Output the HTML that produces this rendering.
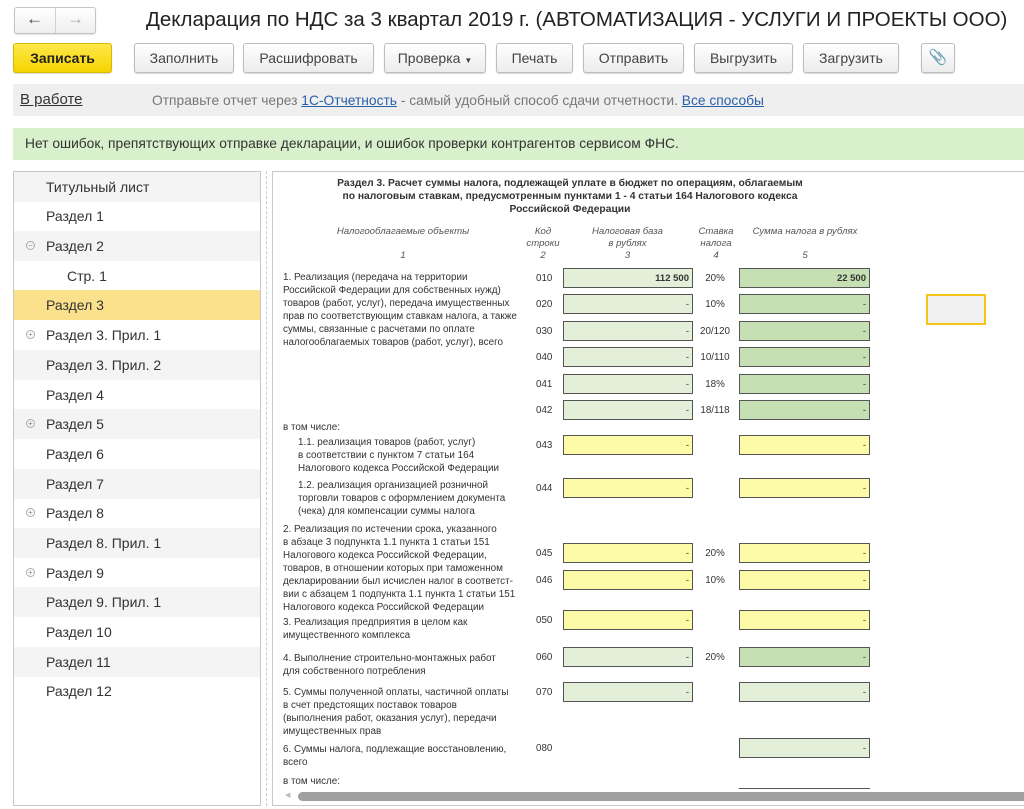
<!DOCTYPE html>
<html><head><meta charset="utf-8"><style>
*{margin:0;padding:0;box-sizing:border-box}
body{width:1024px;height:809px;overflow:hidden;background:#fff;font-family:"Liberation Sans",Arial,sans-serif;color:#333;position:relative}
.a{position:absolute}
.btn{position:absolute;top:43px;height:30px;border:1px solid #bdbdbd;border-radius:3px;background:linear-gradient(#fff,#ececec);box-shadow:0 1px 1px rgba(0,0,0,.15);font-size:14px;color:#444;text-align:center;line-height:28px}
.nav{position:absolute;left:14px;width:246px;height:30px;font-size:14px;line-height:30px;padding-left:32px;color:#333}
.nav.g{background:#f4f4f4}
.f{position:absolute;font-size:9.9px;line-height:13px;color:#333;white-space:nowrap}
.h{position:absolute;font-size:9.6px;font-style:italic;color:#555;text-align:center;line-height:12px}
.fld{position:absolute;height:20px;border:1px solid #555;font-size:9.5px;text-align:right;padding-right:3px;line-height:20px;color:#333}
.c3{left:563px;width:130px}
.c5{left:739px;width:131px}
.lg{background:#e3efd9}
.dg{background:#c6e0b4}
.yl{background:#fdfba8}
.code{position:absolute;left:536px;font-size:9.8px;color:#333}
.rate{position:absolute;left:695px;width:40px;text-align:center;font-size:9.8px;color:#333}
.tg{position:absolute;left:26px;width:9px;height:9px;border:1px solid #aaa;border-radius:50%;font-size:8px;line-height:7px;text-align:center;color:#888}
</style></head><body>
<div class="a" style="left:14px;top:7px;width:82px;height:27px;border:1px solid #c4c4c4;border-radius:3px;background:linear-gradient(#fff,#eee);box-shadow:0 1px 1px rgba(0,0,0,.12)"></div>
<div class="a" style="left:55px;top:8px;width:1px;height:25px;background:#d0d0d0"></div>
<div class="a" style="left:26px;top:9px;font-size:17px;color:#444">&#8592;</div>
<div class="a" style="left:67px;top:9px;font-size:17px;color:#aaa">&#8594;</div>
<div class="a" style="left:146px;top:8px;font-size:20.5px;color:#222;white-space:nowrap">Декларация по НДС за 3 квартал 2019 г. (АВТОМАТИЗАЦИЯ - УСЛУГИ И ПРОЕКТЫ ООО)</div>
<div class="btn" style="left:13px;width:99px;background:linear-gradient(#ffe84a,#f5d400);border-color:#d9b800;font-weight:bold;color:#222">Записать</div>
<div class="btn" style="left:134px;width:100px">Заполнить</div>
<div class="btn" style="left:243px;width:131px">Расшифровать</div>
<div class="btn" style="left:384px;width:102px">Проверка <span style="font-size:8px">&#9660;</span></div>
<div class="btn" style="left:496px;width:77px">Печать</div>
<div class="btn" style="left:583px;width:101px">Отправить</div>
<div class="btn" style="left:694px;width:99px">Выгрузить</div>
<div class="btn" style="left:803px;width:96px">Загрузить</div>
<div class="btn" style="left:921px;width:34px;font-size:15px;color:#666">&#128206;</div>
<div class="a" style="left:13px;top:84px;width:1011px;height:32px;background:#efefef"></div>
<div class="a" style="left:20px;top:91px;font-size:15px;color:#333;text-decoration:underline">В работе</div>
<div class="a" style="left:152px;top:93px;font-size:13.8px;color:#777;white-space:nowrap">Отправьте отчет через <span style="color:#2a5fa8;text-decoration:underline">1С-Отчетность</span> - самый удобный способ сдачи отчетности. <span style="color:#2a5fa8;text-decoration:underline">Все способы</span></div>
<div class="a" style="left:13px;top:128px;width:1011px;height:32px;background:#d8f0cc"></div>
<div class="a" style="left:25px;top:136px;font-size:13.8px;color:#333;white-space:nowrap">Нет ошибок, препятствующих отправке декларации, и ошибок проверки контрагентов сервисом ФНС.</div>
<div class="a" style="left:13px;top:171px;width:248px;height:635px;border:1px solid #c8c8c8"></div>
<div class="nav g" style="top:172px">Титульный лист</div>
<div class="nav" style="top:201px">Раздел 1</div>
<div class="nav g" style="top:231px">Раздел 2</div><div class="tg" style="top:241px">−</div>
<div class="nav" style="top:261px;padding-left:53px">Стр. 1</div>
<div class="nav" style="top:290px;background:#fbe18b">Раздел 3</div>
<div class="nav" style="top:320px">Раздел 3. Прил. 1</div><div class="tg" style="top:330px">+</div>
<div class="nav g" style="top:350px">Раздел 3. Прил. 2</div>
<div class="nav" style="top:380px">Раздел 4</div>
<div class="nav g" style="top:409px">Раздел 5</div><div class="tg" style="top:419px">+</div>
<div class="nav" style="top:439px">Раздел 6</div>
<div class="nav g" style="top:469px">Раздел 7</div>
<div class="nav" style="top:498px">Раздел 8</div><div class="tg" style="top:508px">+</div>
<div class="nav g" style="top:528px">Раздел 8. Прил. 1</div>
<div class="nav" style="top:558px">Раздел 9</div><div class="tg" style="top:568px">+</div>
<div class="nav g" style="top:587px">Раздел 9. Прил. 1</div>
<div class="nav" style="top:617px">Раздел 10</div>
<div class="nav g" style="top:647px">Раздел 11</div>
<div class="nav" style="top:676px">Раздел 12</div>
<div class="a" style="left:266px;top:171px;height:635px;border-left:1px dashed #ccc"></div>
<div class="a" style="left:272px;top:171px;width:760px;height:635px;border:1px solid #c8c8c8"></div>
<div class="a" style="left:290px;top:177px;width:560px;text-align:center;font-size:10.3px;font-weight:bold;line-height:13px;color:#333">Раздел 3. Расчет суммы налога, подлежащей уплате в бюджет по операциям, облагаемым<br>по налоговым ставкам, предусмотренным пунктами 1 - 4 статьи 164 Налогового кодекса<br>Российской Федерации</div>
<div class="h" style="left:283px;top:226px;width:240px">Налогооблагаемые объекты<br><br>1</div>
<div class="h" style="left:525px;top:226px;width:36px">Код<br>строки<br>2</div>
<div class="h" style="left:565px;top:226px;width:125px">Налоговая база<br>в рублях<br>3</div>
<div class="h" style="left:695px;top:226px;width:42px">Ставка<br>налога<br>4</div>
<div class="h" style="left:740px;top:226px;width:130px">Сумма налога в рублях<br><br>5</div>

<div class="f" style="left:283px;top:271px">1. Реализация (передача на территории<br>Российской Федерации для собственных нужд)<br>товаров (работ, услуг), передача имущественных<br>прав по соответствующим ставкам налога, а также<br>суммы, связанные с расчетами по оплате<br>налогооблагаемых товаров (работ, услуг), всего</div>
<div class="code" style="top:273px">010</div><div class="fld c3 lg" style="top:268px;font-weight:bold">112 500</div><div class="rate" style="top:273px">20%</div><div class="fld c5 dg" style="top:268px;font-weight:bold">22 500</div>
<div class="code" style="top:299px">020</div><div class="fld c3 lg" style="top:294px">-</div><div class="rate" style="top:299px">10%</div><div class="fld c5 dg" style="top:294px">-</div>
<div class="code" style="top:326px">030</div><div class="fld c3 lg" style="top:321px">-</div><div class="rate" style="top:326px">20/120</div><div class="fld c5 dg" style="top:321px">-</div>
<div class="code" style="top:352px">040</div><div class="fld c3 lg" style="top:347px">-</div><div class="rate" style="top:352px">10/110</div><div class="fld c5 dg" style="top:347px">-</div>
<div class="code" style="top:379px">041</div><div class="fld c3 lg" style="top:374px">-</div><div class="rate" style="top:379px">18%</div><div class="fld c5 dg" style="top:374px">-</div>
<div class="code" style="top:405px">042</div><div class="fld c3 lg" style="top:400px">-</div><div class="rate" style="top:405px">18/118</div><div class="fld c5 dg" style="top:400px">-</div>
<div class="a" style="left:926px;top:294px;width:60px;height:31px;border:2px solid #f5c518;background:#f0f0f0"></div>

<div class="f" style="left:283px;top:421px">в том числе:</div>
<div class="f" style="left:298px;top:436px">1.1. реализация товаров (работ, услуг)<br>в соответствии с пунктом 7 статьи 164<br>Налогового кодекса Российской Федерации</div>
<div class="code" style="top:440px">043</div><div class="fld c3 yl" style="top:435px">-</div><div class="fld c5 yl" style="top:435px">-</div>
<div class="f" style="left:298px;top:479px">1.2. реализация организацией розничной<br>торговли товаров с оформлением документа<br>(чека) для компенсации суммы налога</div>
<div class="code" style="top:483px">044</div><div class="fld c3 yl" style="top:478px">-</div><div class="fld c5 yl" style="top:478px">-</div>
<div class="f" style="left:283px;top:523px">2. Реализация по истечении срока, указанного<br>в абзаце 3 подпункта 1.1 пункта 1 статьи 151<br>Налогового кодекса Российской Федерации,<br>товаров, в отношении которых при таможенном<br>декларировании был исчислен налог в соответст-<br>вии с абзацем 1 подпункта 1.1 пункта 1 статьи 151<br>Налогового кодекса Российской Федерации</div>
<div class="code" style="top:548px">045</div><div class="fld c3 yl" style="top:543px">-</div><div class="rate" style="top:548px">20%</div><div class="fld c5 yl" style="top:543px">-</div>
<div class="code" style="top:575px">046</div><div class="fld c3 yl" style="top:570px">-</div><div class="rate" style="top:575px">10%</div><div class="fld c5 yl" style="top:570px">-</div>
<div class="f" style="left:283px;top:616px">3. Реализация предприятия в целом как<br>имущественного комплекса</div>
<div class="code" style="top:615px">050</div><div class="fld c3 yl" style="top:610px">-</div><div class="fld c5 yl" style="top:610px">-</div>
<div class="f" style="left:283px;top:652px">4. Выполнение строительно-монтажных работ<br>для собственного потребления</div>
<div class="code" style="top:652px">060</div><div class="fld c3 lg" style="top:647px">-</div><div class="rate" style="top:652px">20%</div><div class="fld c5 dg" style="top:647px">-</div>
<div class="f" style="left:283px;top:686px">5. Суммы полученной оплаты, частичной оплаты<br>в счет предстоящих поставок товаров<br>(выполнения работ, оказания услуг), передачи<br>имущественных прав</div>
<div class="code" style="top:687px">070</div><div class="fld c3 lg" style="top:682px">-</div><div class="fld c5 lg" style="top:682px">-</div>
<div class="f" style="left:283px;top:743px">6. Суммы налога, подлежащие восстановлению,<br>всего</div>
<div class="code" style="top:743px">080</div><div class="fld c5 lg" style="top:738px">-</div>
<div class="f" style="left:283px;top:775px">в том числе:</div>
<div class="a" style="left:739px;top:788px;width:131px;border-top:1px solid #555"></div>
<div class="a" style="left:285px;top:791px;font-size:7px;color:#bbb">&#9664;</div>
<div class="a" style="left:298px;top:792px;width:730px;height:9px;background:#a0a0a0;border-radius:5px"></div>
</body></html>
